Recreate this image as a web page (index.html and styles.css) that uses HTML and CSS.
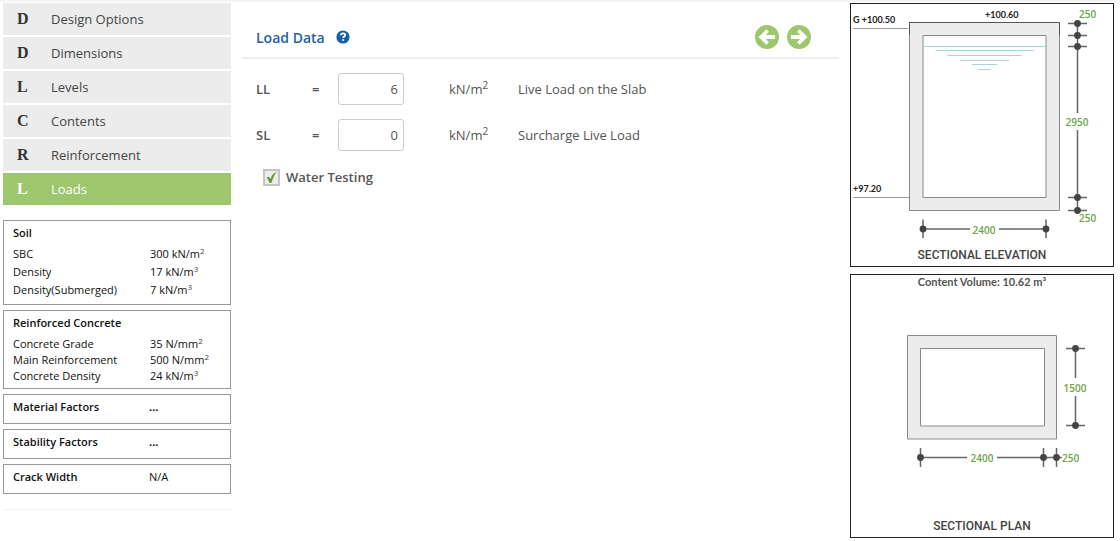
FILE: index.html
```html
<!DOCTYPE html>
<html lang="en">
<head>
<meta charset="utf-8">
<title>Load Data</title>
<link rel="stylesheet" href="styles.css">
</head>
<body>
<div class="page">
  <aside class="sidebar">
    <nav class="steps">
      <a class="step" href="#design"><b class="initial">D</b>Design Options</a>
      <a class="step" href="#dimensions"><b class="initial">D</b>Dimensions</a>
      <a class="step" href="#levels"><b class="initial">L</b>Levels</a>
      <a class="step" href="#contents"><b class="initial">C</b>Contents</a>
      <a class="step" href="#reinforcement"><b class="initial">R</b>Reinforcement</a>
      <a class="step active" href="#loads" aria-current="page"><b class="initial">L</b>Loads</a>
    </nav>
    <div class="summary">
      <section class="card">
        <h2>Soil</h2>
        <table class="roomy">
          <tr><th scope="row">SBC</th><td>300 kN/m<sup>2</sup></td></tr>
          <tr><th scope="row">Density</th><td>17 kN/m<sup>3</sup></td></tr>
          <tr><th scope="row">Density(Submerged)</th><td>7 kN/m<sup>3</sup></td></tr>
        </table>
      </section>
      <section class="card">
        <h2>Reinforced Concrete</h2>
        <table>
          <tr><th scope="row">Concrete Grade</th><td>35 N/mm<sup>2</sup></td></tr>
          <tr><th scope="row">Main Reinforcement</th><td>500 N/mm<sup>2</sup></td></tr>
          <tr><th scope="row">Concrete Density</th><td>24 kN/m<sup>3</sup></td></tr>
        </table>
      </section>
      <section class="card single"><h2>Material Factors</h2><b>...</b></section>
      <section class="card single"><h2>Stability Factors</h2><b>...</b></section>
      <section class="card single"><h2>Crack Width</h2><span>N/A</span></section>
    </div>
  </aside>

  <main class="main">
    <header class="main-head">
      <h1>Load Data</h1>
      <button class="icon-button help" type="button" aria-label="Help">
        <svg width="14" height="14" viewBox="0 0 14 14"><circle cx="7" cy="7" r="6.6" fill="#1560a8"/><path d="M4.9 5.3C5 4 5.8 3.3 7 3.3S9.2 4 9.2 5.1C9.2 6.5 7.2 6.5 7.2 8.1" fill="none" stroke="#fff" stroke-width="1.8"/><path d="M6.2 9.2h1.9v1.8H6.2z" fill="#fff"/></svg>
      </button>
      <div class="pager">
        <button class="icon-button" type="button" aria-label="Previous">
          <svg width="24" height="24" viewBox="0 0 24 24"><circle cx="12" cy="12" r="12" fill="#9dc66d"/><path d="M12.6 5.5 6.2 12l6.4 6.5M6.5 12H20" fill="none" stroke="#fff" stroke-width="3.8"/></svg>
        </button>
        <button class="icon-button" type="button" aria-label="Next">
          <svg width="24" height="24" viewBox="0 0 24 24"><circle cx="12" cy="12" r="12" fill="#9dc66d"/><path d="M11.4 5.5 17.8 12l-6.4 6.5M17.5 12H4" fill="none" stroke="#fff" stroke-width="3.8"/></svg>
        </button>
      </div>
    </header>
    <form class="form">
      <div class="field">
        <label for="ll">LL</label><span class="equals">=</span>
        <input id="ll" type="text" value="6">
        <span>kN/m<sup>2</sup></span><span>Live Load on the Slab</span>
      </div>
      <div class="field">
        <label for="sl">SL</label><span class="equals">=</span>
        <input id="sl" type="text" value="0">
        <span>kN/m<sup>2</sup></span><span>Surcharge Live Load</span>
      </div>
      <div class="check">
        <span class="tick">
          <input id="water" type="checkbox" checked>
          <svg width="17" height="17" viewBox="0 0 17 17"><path d="M3.600 8.600 6 7.800 7.400 10C8.500 7 10.200 4.400 13.600 2.600 11.600 6 9.700 9.600 8.500 13.800L6.400 14C5.800 12 5 10.200 3.600 8.600z" fill="#5f9b34"/></svg>
        </span>
        <label for="water">Water Testing</label>
      </div>
    </form>
  </main>

  <aside class="drawings">
    <figure>
      <svg viewBox="1 1 262 262" role="img" aria-label="Sectional elevation">
        <path class="wall" fill-rule="evenodd" d="M59.500 19.500h150v188h-150zM73 32.500h123v162H73z"/>
        <path class="edge" d="M59.500 32V19.500h150V32"/>
        <g class="water"><path d="M74 43.500h121M85.500 47.500H184M97.500 52.500h74M110 57.500h49M122 61.500h25M128 66.500h13"/></g>
        <path class="level-line" d="M3 25.500h55M3 194.500h56"/>
        <g class="dim">
          <path d="M227.500 20v90M227.500 127v80.500M73 226h47M149 226h47"/>
          <path d="M218 20.500h19M218 32.500h19M218 43.500h19M218 194.500h19M218 207.500h19M73 216.500V235M196 216.500V235"/>
          <circle cx="227.500" cy="20.500" r="3.400"/><circle cx="227.500" cy="32.500" r="3.400"/><circle cx="227.500" cy="43.500" r="3.400"/><circle cx="227.500" cy="194.500" r="3.400"/><circle cx="227.500" cy="207.500" r="3.400"/>
          <circle cx="73" cy="226" r="3.400"/><circle cx="196" cy="226" r="3.400"/>
        </g>
        <g class="level"><text x="3" y="20">G +100.50</text><text x="135" y="15">+100.60</text><text x="3" y="189">+97.20</text></g>
        <g class="value"><text x="229" y="15">250</text><text x="229" y="219">250</text><text class="mid" x="227" y="123">2950</text><text class="mid" x="134" y="231">2400</text></g>
        <text class="caption mid" x="132" y="256">SECTIONAL ELEVATION</text>
      </svg>
    </figure>
    <figure>
      <svg viewBox="1 1 262 262" role="img" aria-label="Sectional plan">
        <text class="volume mid" x="132" y="12">Content Volume: 10.62 m³</text>
        <path class="wall" fill-rule="evenodd" d="M57.500 61.500h149V165h-149zM70.500 74.500h124v77.500h-124z"/>
        <g class="dim">
          <path d="M225.500 74.500V104M225.500 122v29.500M70.500 183.500H117M147 183.500h65"/>
          <path d="M216 74.500h19M216 151.500h19M70.500 174v19M193.500 174v19M206.500 174v19"/>
          <circle cx="225.500" cy="74.500" r="3.400"/><circle cx="225.500" cy="151.500" r="3.400"/><circle cx="70.500" cy="183.500" r="3.400"/><circle cx="193.500" cy="183.500" r="3.400"/><circle cx="206.500" cy="183.500" r="3.400"/>
        </g>
        <g class="value"><text class="mid" x="225" y="118">1500</text><text class="mid" x="132" y="188">2400</text><text x="212" y="188">250</text></g>
        <text class="caption mid" x="132" y="256">SECTIONAL PLAN</text>
      </svg>
    </figure>
  </aside>
</div>
</body>
</html>
```
FILE: styles.css
```css
* { box-sizing: border-box; }
body {
  margin: 0;
  border-top: 2px solid #f4f4f4;
  background: #fff;
  font-family: "Open Sans", sans-serif;
  font-size: 13px;
  color: #555;
}
h1, h2, figure { margin: 0; }
.page {
  display: grid;
  grid-template-columns: 228px minmax(0, 1fr) 264px;
  column-gap: 11px;
  padding: 1px 6px 0 3px;
}
sup { font-size: 10px; line-height: 0; vertical-align: 5px; }

.steps { display: flex; flex-direction: column; gap: 2px; }
.step {
  display: flex;
  align-items: center;
  height: 32px;
  padding-left: 14px;
  background: #ececec;
  color: #444;
  text-decoration: none;
}
.initial {
  width: 34px;
  font: bold 16px "Liberation Serif", serif;
  color: #333;
}
.step.active { background: #9dc66d; color: #fff; }
.active .initial { color: #fff; }

.summary {
  display: flex;
  flex-direction: column;
  gap: 5px;
  margin-top: 15px;
  padding-bottom: 15px;
  border-bottom: 1px solid #f2f2f2;
  font-size: 11px;
  line-height: 16px;
  color: #111;
}
.summary sup { font-size: 8px; vertical-align: 4px; color: #444; }
.card { padding: 4px 9px; border: 1px solid #999; }
.card h2 { font-size: 11px; font-weight: 600; line-height: 16px; }
.card table { width: 100%; margin-top: 5px; border-collapse: collapse; }
.card th, .card td { padding: 0; font-weight: 400; text-align: left; }
.card th { width: 137px; }
.card .roomy { margin: 4px 0 1px; line-height: 18px; }
.single { display: grid; grid-template-columns: 136px 1fr; padding: 4px 9px 8px; }

.main-head {
  display: flex;
  align-items: center;
  height: 56px;
  padding: 14px 28px 0 14px;
  border-bottom: 2px solid #eee;
}
.main-head h1 { font-size: 14px; font-weight: 600; color: #1f5fa6; }
.icon-button { display: flex; padding: 0; border: 0; background: none; cursor: pointer; }
.help { margin-left: 11px; }
.pager { display: flex; gap: 8px; margin-left: auto; }
.form { display: flex; flex-direction: column; gap: 14px; padding: 14px; }
.field {
  display: grid;
  grid-template-columns: 56px 26px 111px 69px 1fr;
  align-items: center;
}
.field label, .equals, .check label { font-weight: 600; }
.field input {
  width: 66px;
  height: 32px;
  padding: 0 5px;
  border: 1px solid #ccc;
  border-radius: 3px;
  font: inherit;
  color: #555;
  text-align: right;
}
.check { display: flex; align-items: center; gap: 6px; padding: 3px 7px; }
.tick { display: grid; }
.tick input, .tick svg { grid-area: 1 / 1; }
.tick svg { pointer-events: none; }
.tick input {
  appearance: none;
  width: 17px;
  height: 17px;
  margin: 0;
  border: 2px solid #c4c4c4;
  background: #ececec;
}

.drawings { display: flex; flex-direction: column; gap: 7px; }
.drawings figure { border: 1px solid #222; }
.drawings svg { display: block; width: 100%; }
.wall { fill: #ececec; stroke: #8a8a8a; }
.edge { fill: none; stroke: #555; }
.water { fill: none; stroke: #a5d3e2; }
.level-line { stroke: #999; }
.dim path { fill: none; stroke: #666; stroke-width: 1.5px; }
.dim circle { fill: #444; }
.level { font: bold 9px Lato, sans-serif; fill: #222; }
.value { font: 600 10px "Open Sans", sans-serif; fill: #6ca33f; }
.volume { font: bold 11px Lato, sans-serif; fill: #555; }
.caption { font: 500 12px Roboto, sans-serif; fill: #444; }
.mid { text-anchor: middle; }
```
